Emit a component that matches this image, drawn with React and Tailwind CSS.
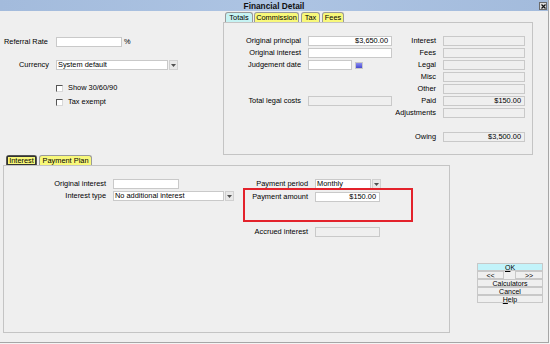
import React from "react";

function Field({ className = "", value = "", disabled = false }) {
  return (
    <div
      className={`h-[10px] shrink-0 border border-[#c9c9c9] ${disabled ? "bg-[#efefef]" : "bg-white"} text-right pr-[3px] leading-[8px] ${className}`}
    >
      {value}
    </div>
  );
}

function DropBtn() {
  return (
    <div className="w-[9px] h-[10px] shrink-0 ml-[1px] border border-[#d0d0d0] bg-[#e8e8e8] flex items-center justify-center">
      <svg width="5" height="3" viewBox="0 0 5 3">
        <path d="M0 0 L5 0 L2.5 3 Z" fill="#505050" />
      </svg>
    </div>
  );
}

function Select({ className = "", value }) {
  return (
    <div className="flex h-[10px] shrink-0">
      <div className={`h-[10px] border border-[#c9c9c9] bg-white pl-[1px] leading-[8px] ${className}`}>{value}</div>
      <DropBtn />
    </div>
  );
}

function Check({ label }) {
  return (
    <div className="flex items-center h-[8px]">
      <div className="w-[7px] h-[7px] bg-white border-t border-l border-[#555555] border-r-[#d8d8d8] border-b-[#d8d8d8] border-r border-b" />
      <span className="ml-[5px] leading-[8px]">{label}</span>
    </div>
  );
}

function Tab({ className = "", children }) {
  return (
    <div
      className={`h-[10px] border border-b-0 border-[#9a9a9a] rounded-t-[3px] text-center leading-[9px] ${className}`}
    >
      {children}
    </div>
  );
}

function Row({ label, labelW, children }) {
  return (
    <div className="flex items-center h-[10px]">
      <div className={`${labelW} text-right shrink-0 leading-[10px]`}>{label}</div>
      <div className="ml-[7px] flex items-center">{children}</div>
    </div>
  );
}

function Btn({ children, className = "" }) {
  return (
    <div
      className={`h-[8px] border border-[#c8c8c8] text-center leading-[7px] text-[7px] ${className}`}
    >
      {children}
    </div>
  );
}

export default function App() {
  return (
    <div className="w-[550px] h-[344px] bg-[#f4f4f4] overflow-hidden font-['Liberation_Sans',Arial,sans-serif] text-[7.4px] text-black">
      <div className="w-[549px] h-[343px] bg-[#efefef] border-r border-b border-[#a6a6a6] flex flex-col">
        {/* Title bar */}
        <div className="relative h-[11px] shrink-0 bg-gradient-to-r from-[#a3bbdc] via-[#adc4e3] to-[#a3bbdc] flex items-center justify-center">
          <span className="font-bold text-[8.3px] leading-[10px] text-[#101010]">Financial Detail</span>
          <div className="absolute right-[1px] top-[2px] w-[8px] h-[8px] bg-[#dedede] border border-[#6a6a6a] flex items-center justify-center">
            <svg width="5" height="5" viewBox="0 0 5 5">
              <path d="M0.5 0.5 L4.5 4.5 M4.5 0.5 L0.5 4.5" stroke="#111" strokeWidth="1.2" />
            </svg>
          </div>
        </div>

        {/* Top row */}
        <div className="flex h-[144px] shrink-0">
          {/* Left column */}
          <div className="w-[223px] shrink-0 pt-[26px] pl-[4px]">
            <div className="flex items-center h-[10px]">
              <div className="w-[52px] leading-[10px]">Referral Rate</div>
              <Field className="w-[66px]" />
              <span className="ml-[2px]">%</span>
            </div>
            <div className="flex items-center h-[10px] mt-[13px]">
              <div className="w-[52px] pr-[7px] text-right leading-[10px]">Currency</div>
              <Select className="w-[112px]" value="System default" />
            </div>
            <div className="pl-[52px] mt-[14px]">
              <Check label="Show 30/60/90" />
              <div className="mt-[6px]">
                <Check label="Tax exempt" />
              </div>
            </div>
          </div>

          {/* Right tabbed panel */}
          <div className="w-[310px] shrink-0 flex flex-col">
            <div className="h-[11px] flex items-end pl-[2px] gap-[1px]">
              <Tab className="w-[28px] bg-[#c6f3f3]">Totals</Tab>
              <Tab className="w-[45px] bg-[#f8f87a]">Commission</Tab>
              <Tab className="w-[19px] bg-[#f8f87a] ml-[1px]">Tax</Tab>
              <Tab className="w-[22px] bg-[#f8f87a] ml-[1px]">Fees</Tab>
            </div>
            <div className="h-[133px] border border-[#c4c4c4] pt-[13px] flex">
              <div className="w-[168px] flex flex-col gap-[2px]">
                <Row label="Original principal" labelW="w-[77px]">
                  <Field className="w-[84px]" value="$3,650.00" />
                </Row>
                <Row label="Original interest" labelW="w-[77px]">
                  <Field className="w-[84px]" />
                </Row>
                <Row label="Judgement date" labelW="w-[77px]">
                  <Field className="w-[44px]" />
                  <div className="ml-[3px] w-[8px] h-[7px] border border-[#c8c8c8] bg-[#f4f4f4] flex items-center justify-center">
                    <div className="w-[6px] h-[5px] bg-gradient-to-b from-[#8c8cf0] to-[#4848d0]" />
                  </div>
                </Row>
                <div className="h-[10px]" />
                <div className="h-[10px]" />
                <Row label="Total legal costs" labelW="w-[77px]">
                  <Field className="w-[84px]" disabled />
                </Row>
              </div>
              <div className="w-[133px] flex flex-col gap-[2px]">
                <Row label="Interest" labelW="w-[44px]">
                  <Field className="w-[82px]" disabled />
                </Row>
                <Row label="Fees" labelW="w-[44px]">
                  <Field className="w-[82px]" disabled />
                </Row>
                <Row label="Legal" labelW="w-[44px]">
                  <Field className="w-[82px]" disabled />
                </Row>
                <Row label="Misc" labelW="w-[44px]">
                  <Field className="w-[82px]" disabled />
                </Row>
                <Row label="Other" labelW="w-[44px]">
                  <Field className="w-[82px]" disabled />
                </Row>
                <Row label="Paid" labelW="w-[44px]">
                  <Field className="w-[82px]" disabled value="$150.00" />
                </Row>
                <Row label="Adjustments" labelW="w-[44px]">
                  <Field className="w-[82px]" disabled />
                </Row>
                <div className="h-[10px]" />
                <Row label="Owing" labelW="w-[44px]">
                  <Field className="w-[82px]" disabled value="$3,500.00" />
                </Row>
              </div>
            </div>
          </div>
        </div>

        {/* Lower row */}
        <div className="flex flex-1">
          <div className="ml-[3px] w-[447px] shrink-0 flex flex-col">
            <div className="h-[10px] flex items-end pl-[3px] gap-[2px]">
              <Tab className="w-[31px] bg-[#f8f87a] border-[#555555] flex items-center justify-center">
                <span className="inline-block border border-[#333333] leading-[7px] px-[1px]">Interest</span>
              </Tab>
              <Tab className="w-[53px] bg-[#f8f87a]">Payment Plan</Tab>
            </div>
            <div className="relative h-[168px] border border-[#c4c4c4] pt-[13px] pl-[1px] flex">
              <div className="w-[230px] shrink-0 flex flex-col gap-[2px]">
                <Row label="Original interest" labelW="w-[101px]">
                  <Field className="w-[66px]" />
                </Row>
                <Row label="Interest type" labelW="w-[101px]">
                  <Select className="w-[111px]" value="No additional interest" />
                </Row>
              </div>
              <div className="ml-[3px] flex flex-col">
                <Row label="Payment period" labelW="w-[70px]">
                  <Select className="w-[56px]" value="Monthly" />
                </Row>
                <div className="mt-[3px]">
                  <Row label="Payment amount" labelW="w-[70px]">
                    <Field className="w-[65px]" value="$150.00" />
                  </Row>
                </div>
                <div className="mt-[25px]">
                  <Row label="Accrued interest" labelW="w-[70px]">
                    <Field className="w-[65px]" disabled />
                  </Row>
                </div>
              </div>
              <div className="absolute left-[239px] top-[22px] w-[170px] h-[34px] border-2 border-[#e3222b]" />
            </div>
          </div>

          {/* Buttons */}
          <div className="ml-[27px] w-[66px] pt-[108px] flex flex-col">
            <Btn className="bg-[#c2f3fa]">
              <span className="underline">O</span>K
            </Btn>
            <div className="flex justify-between">
              <Btn className="w-[27px]">
                <span className="underline">&lt;</span>&lt;
              </Btn>
              <Btn className="w-[28px]">
                <span className="underline">&gt;</span>&gt;
              </Btn>
            </div>
            <Btn>
              C<span className="underline">a</span>lculators
            </Btn>
            <Btn>
              <span className="underline">C</span>ancel
            </Btn>
            <Btn>
              <span className="underline">H</span>elp
            </Btn>
          </div>
        </div>
      </div>
    </div>
  );
}
